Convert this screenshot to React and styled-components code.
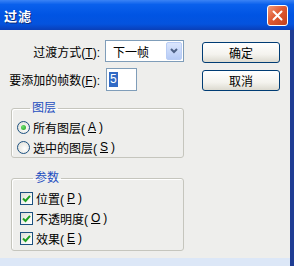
import React from 'react';
import styled, { createGlobalStyle } from 'styled-components';

const GlobalStyle = createGlobalStyle`
  body {
    margin: 0;
    background: #dce7f7;
    font-family: "Liberation Sans", "Noto Sans CJK SC", sans-serif;
    font-size: 12px;
    text-autospace: no-autospace;
  }
`;

const Window = styled.div`
  width: 294px;
  height: 266px;
  display: flex;
  flex-direction: column;
  overflow: hidden;
`;

const TitleBar = styled.div`
  height: 30px;
  flex-shrink: 0;
  display: flex;
  align-items: center;
  justify-content: space-between;
  padding: 0 6px 0 4px;
  background: linear-gradient(to bottom, #3b83f5 0%, #0a60ec 15%, #0054e3 50%, #0453de 80%, #0a3fb8 100%);
`;

const Title = styled.span`
  color: #fff;
  font-weight: bold;
  font-size: 13px;
  text-shadow: 1px 1px 0 #0a2a7a;
  letter-spacing: 1px;
`;

const CloseButton = styled.div`
  width: 19px;
  height: 19px;
  border: 1px solid #fff;
  border-radius: 3px;
  background: linear-gradient(135deg, #f09a7a 0%, #e05a33 45%, #c2401c 100%);
  display: flex;
  align-items: center;
  justify-content: center;
`;

const Frame = styled.div`
  flex: 1;
  display: flex;
  flex-direction: column;
  border-right: 4px solid #1f3d94;
`;

const Body = styled.div`
  height: 228px;
  background: #eeeeec;
  display: flex;
  padding-top: 10px;
  box-sizing: border-box;
`;

const BottomStrip = styled.div`
  flex: 1;
  background: #dce7f7;
`;

const LeftCol = styled.div`
  width: 190px;
  display: flex;
  flex-direction: column;
`;

const RightCol = styled.div`
  margin-left: 12px;
  padding-top: 2px;
  display: flex;
  flex-direction: column;
  gap: 7px;
`;

const FieldRow = styled.div`
  display: flex;
  align-items: center;
  height: 22px;
  margin-top: ${p => p.$top || 0}px;
`;

const Label = styled.label`
  width: 100px;
  text-align: right;
  color: #000;
  white-space: nowrap;
  margin-right: 5px;
`;

const Select = styled.div`
  width: 79px;
  height: 22px;
  box-sizing: border-box;
  border: 1px solid #7f9db9;
  background: #fff;
  display: flex;
  align-items: center;
  justify-content: space-between;
  padding: 0 1px 0 7px;
`;

const DropButton = styled.div`
  width: 16px;
  height: 18px;
  border-radius: 2px;
  border: 1px solid #b9cdf5;
  box-sizing: border-box;
  background: linear-gradient(to bottom, #dbe6fd, #b6cbf6);
  display: flex;
  align-items: center;
  justify-content: center;
`;

const Input = styled.div`
  width: 31px;
  height: 23px;
  box-sizing: border-box;
  border: 1px solid #7f9db9;
  background: #fff;
  display: flex;
  align-items: center;
  padding-left: 2px;
  margin-left: 1px;
`;

const Selected = styled.span`
  background: #316ac5;
  color: #fff;
  padding: 0 1px;
  line-height: 15px;
`;

const Button = styled.div`
  width: 78px;
  height: 21px;
  box-sizing: border-box;
  border: 1px solid #003c74;
  border-radius: 3px;
  background: linear-gradient(to bottom, #ffffff 0%, #f4f3ee 60%, #dcdad0 100%);
  display: flex;
  align-items: center;
  justify-content: center;
  color: #000;
`;

const Group = styled.fieldset`
  margin: ${p => p.$top}px 0 0 11px;
  width: 173px;
  box-sizing: border-box;
  border: 1px solid #c5c5bd;
  border-radius: 3px;
  box-shadow: inset 1px 1px 0 #fff;
  padding: ${p => p.$pad}px 0 ${p => p.$bottom}px ${p => p.$left}px;
`;

const Legend = styled.legend`
  margin-left: 13px;
  padding: 0 2px;
  line-height: 14px;
  color: #1e4fc0;
`;

const OptionRow = styled.div`
  height: 20px;
  display: flex;
  align-items: center;
  gap: 3px;
  color: #000;
`;

const Radio = styled.span`
  width: 13px;
  height: 13px;
  box-sizing: border-box;
  border-radius: 50%;
  border: 1px solid #1c5180;
  background: radial-gradient(circle at 60% 60%, #ffffff 0%, #e6e6e0 70%, #d4d4cc 100%);
  display: flex;
  align-items: center;
  justify-content: center;

  &::after {
    content: '';
    width: 5px;
    height: 5px;
    border-radius: 50%;
    background: ${p => (p.$on ? 'radial-gradient(circle at 35% 35%, #6fe06f, #21a121)' : 'transparent')};
  }
`;

const Check = styled.span`
  width: 13px;
  height: 13px;
  box-sizing: border-box;
  border: 1px solid #1c5180;
  background: linear-gradient(135deg, #dcdcd4 0%, #f6f6f2 60%, #ffffff 100%);
  display: flex;
  align-items: center;
  justify-content: center;
`;

const U = styled.span`
  text-decoration: underline;
`;

const CheckMark = () => (
  <svg width="9" height="9" viewBox="0 0 9 9">
    <path d="M1 4.5 L3.5 7 L8 1.8" fill="none" stroke="#21a121" strokeWidth="2" />
  </svg>
);

const Chevron = () => (
  <svg width="8" height="6" viewBox="0 0 8 6">
    <path d="M1 1 L4 4 L7 1" fill="none" stroke="#4d6185" strokeWidth="2" />
  </svg>
);

const App = () => (
  <>
    <GlobalStyle />
    <Window>
      <TitleBar>
        <Title>过滤</Title>
        <CloseButton>
          <svg width="11" height="11" viewBox="0 0 11 11">
            <path d="M1.5 1.5 L9.5 9.5 M9.5 1.5 L1.5 9.5" stroke="#fff" strokeWidth="2" strokeLinecap="round" />
          </svg>
        </CloseButton>
      </TitleBar>
      <Frame>
        <Body>
          <LeftCol>
            <FieldRow>
              <Label>过渡方式(<U>T</U>):</Label>
              <Select>
                <span>下一帧</span>
                <DropButton><Chevron /></DropButton>
              </Select>
            </FieldRow>
            <FieldRow $top={6}>
              <Label>要添加的帧数(<U>F</U>):</Label>
              <Input><Selected>5</Selected></Input>
            </FieldRow>
            <Group $top={11} $pad={2} $bottom={0} $left={5}>
              <Legend>图层</Legend>
              <OptionRow><Radio $on />所有图层(<U>A</U>)</OptionRow>
              <OptionRow><Radio />选中的图层(<U>S</U>)</OptionRow>
            </Group>
            <Group $top={13} $pad={3} $bottom={2} $left={8}>
              <Legend>参数</Legend>
              <OptionRow><Check><CheckMark /></Check>位置(<U>P</U>)</OptionRow>
              <OptionRow><Check><CheckMark /></Check>不透明度(<U>O</U>)</OptionRow>
              <OptionRow><Check><CheckMark /></Check>效果(<U>E</U>)</OptionRow>
            </Group>
          </LeftCol>
          <RightCol>
            <Button>确定</Button>
            <Button>取消</Button>
          </RightCol>
        </Body>
        <BottomStrip />
      </Frame>
    </Window>
  </>
);

export default App;
